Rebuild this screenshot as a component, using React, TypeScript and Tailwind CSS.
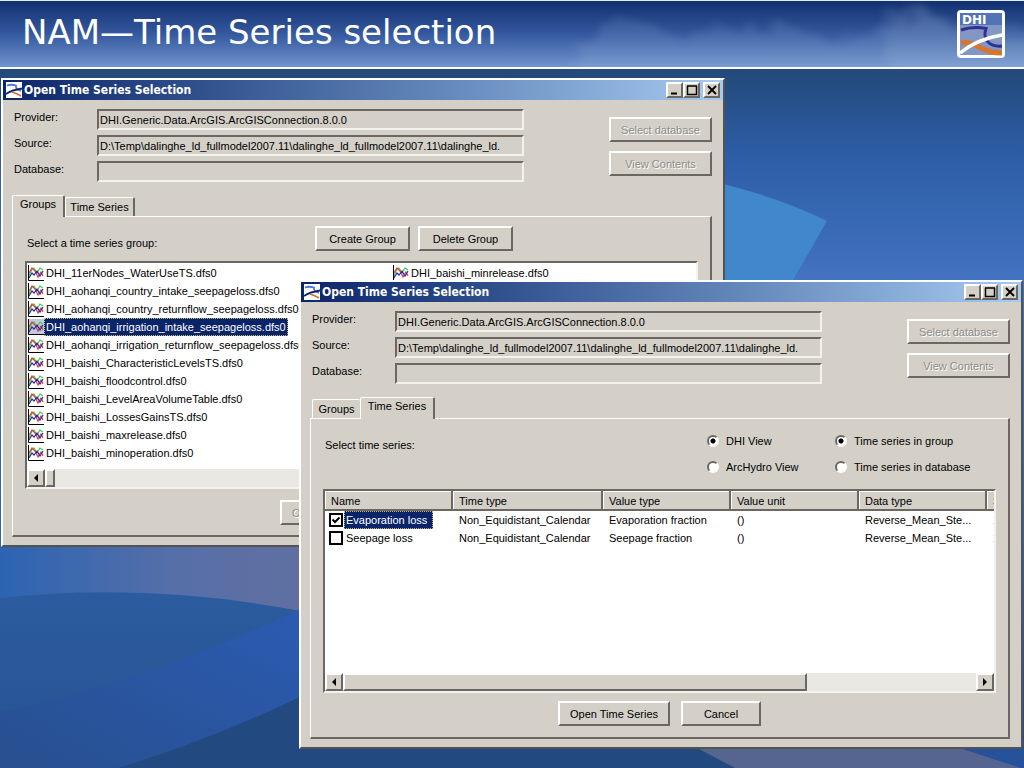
import type { ReactNode } from "react";
import clsx from "clsx";

const raised =
  "border-2 border-t-white border-l-white border-r-[#6b6863] border-b-[#6b6863] bg-[#d4d0c8]";
const sunken =
  "border-2 border-t-[#6b6863] border-l-[#6b6863] border-r-[#f4f2ee] border-b-[#f4f2ee]";

const source =
  "D:\\Temp\\dalinghe_ld_fullmodel2007.11\\dalinghe_ld_fullmodel2007.11\\dalinghe_ld.";

const groups = [
  "DHI_11erNodes_WaterUseTS.dfs0",
  "DHI_aohanqi_country_intake_seepageloss.dfs0",
  "DHI_aohanqi_country_returnflow_seepageloss.dfs0",
  "DHI_aohanqi_irrigation_intake_seepageloss.dfs0",
  "DHI_aohanqi_irrigation_returnflow_seepageloss.dfs0",
  "DHI_baishi_CharacteristicLevelsTS.dfs0",
  "DHI_baishi_floodcontrol.dfs0",
  "DHI_baishi_LevelAreaVolumeTable.dfs0",
  "DHI_baishi_LossesGainsTS.dfs0",
  "DHI_baishi_maxrelease.dfs0",
  "DHI_baishi_minoperation.dfs0",
  "DHI_baishi_minrelease.dfs0",
];

const series = [
  { name: "Evaporation loss", value: "Evaporation fraction", checked: true },
  { name: "Seepage loss", value: "Seepage fraction", checked: false },
];

function Backdrop() {
  return (
    <svg
      className="absolute inset-0 h-full w-full"
      viewBox="0 0 1024 768"
      preserveAspectRatio="none"
      aria-hidden="true"
    >
      <defs>
        <linearGradient id="sky" x1="0" y1="0" x2="0" y2="1">
          <stop offset="0.09" stopColor="#24497a" />
          <stop offset="0.2" stopColor="#2c5da5" />
          <stop offset="0.36" stopColor="#4272c0" />
          <stop offset="0.7" stopColor="#2d62b0" />
          <stop offset="1" stopColor="#234a80" />
        </linearGradient>
        <linearGradient id="mauve" x1="0" y1="0" x2="1" y2="0">
          <stop offset="0" stopColor="#2c64b2" />
          <stop offset="0.55" stopColor="#566fa8" />
          <stop offset="1" stopColor="#626f9f" />
        </linearGradient>
        <linearGradient id="hill" x1="0" y1="0" x2="0" y2="1">
          <stop offset="0" stopColor="#2b5c9f" />
          <stop offset="1" stopColor="#285290" />
        </linearGradient>
        <linearGradient id="band" x1="0" y1="1" x2="1" y2="0">
          <stop offset="0" stopColor="#28508f" />
          <stop offset="1" stopColor="#2b5bb2" />
        </linearGradient>
      </defs>
      <rect width="1024" height="768" fill="url(#sky)" />
      <path d="M700 179 Q770 193 827 221 L770 320 L700 320Z" fill="#4187cc" />
      <rect y="540" width="320" height="100" fill="url(#mauve)" />
      <path d="M0 598 Q150 582 300 611 L320 768 H0Z" fill="url(#hill)" />
      <path d="M0 712 Q160 678 300 609 V768 H0Z" fill="url(#band)" />
      <path d="M118 768 Q210 740 300 697 V740 H1024 V768Z" fill="#234a80" />
      <path d="M682 740 L735 768 H1024 L935 740Z" fill="#56658f" />
      <path d="M935 740 L1024 769 V740Z" fill="#25529a" />
    </svg>
  );
}

function HeaderClouds() {
  return (
    <svg
      className="absolute inset-0 h-full w-full"
      viewBox="0 0 1024 67"
      preserveAspectRatio="none"
      aria-hidden="true"
    >
      <defs>
        <filter id="soft" x="-20%" y="-20%" width="140%" height="140%">
          <feTurbulence type="fractalNoise" baseFrequency="0.07" numOctaves="4" seed="4" />
          <feDisplacementMap in="SourceGraphic" scale="26" />
          <feGaussianBlur stdDeviation="4" />
        </filter>
      </defs>
      <g filter="url(#soft)" fill="#b4c3e0" fillOpacity="0.14">
        <path d="M560 90 L590 34 L630 18 L655 24 L680 40 L720 26 L745 34 L775 24 L800 28 L830 44 L880 36 L885 10 L920 4 L950 20 L1040 30 V90Z" />
        <path d="M880 90 L890 26 L930 14 L960 34 L1040 38 V90Z" />
      </g>
    </svg>
  );
}

function DhiLogo() {
  return (
    <svg className="size-12" viewBox="0 0 48 48" role="img" aria-label="DHI">
      <rect x="1.5" y="1.5" width="45" height="45" rx="2.5" fill="#8397c4" stroke="#fff" strokeWidth="3" />
      <rect x="3" y="3" width="42" height="12" fill="#5273b5" />
      <path d="M4 20 Q16 16 29 18.5 Q26 27 31 32 Q36 37 45 36" fill="none" stroke="#30308f" strokeWidth="3" />
      <path d="M4 33 Q12 31 22 37 Q32 43 45 43" fill="none" stroke="#d5752f" strokeWidth="5" />
      <path d="M3 43 Q20 29 45 25" fill="none" stroke="#fff" strokeWidth="3.5" />
      <text x="5" y="13.5" fill="#fff" fontFamily="DejaVu Sans, sans-serif" fontWeight="700" fontSize="12">
        DHI
      </text>
    </svg>
  );
}

function WindowIcon() {
  return (
    <svg className="size-4" viewBox="0 0 16 16" aria-hidden="true">
      <rect width="16" height="16" fill="#fff" />
      <path d="M1 3.5 Q5 2 10 3.5 Q9 7 15 9" fill="none" stroke="#4a78dc" strokeWidth="1.8" />
      <path d="M0 12 Q6 8 16 6.5" fill="none" stroke="#10206a" strokeWidth="1.8" />
      <path d="M6 10 Q10 11 15 14" fill="none" stroke="#d56a3c" strokeWidth="1.6" />
    </svg>
  );
}

function ChartIcon({ selected = false }: { selected?: boolean }) {
  return (
    <svg className="size-4 shrink-0" viewBox="0 0 16 16" aria-hidden="true">
      <rect width="16" height="16" fill={selected ? "#c3cbe2" : "#fff"} />
      <path d="M1 11 L4 4 L6 3 L9 8 L12 3 L15 5" fill="none" stroke="#3ecf4a" strokeWidth="1.2" />
      <path d="M1 8 L4 3 L7 6 L10 12 L13 7 L15 11" fill="none" stroke="#e23a3a" strokeWidth="1.2" />
      <path d="M1 13 L4 8 L6 10 L9 6 L12 11 L15 6" fill="none" stroke="#2d2da8" strokeWidth="1.2" />
      <path d="M0.5 0 V15.5 H16" fill="none" stroke="#000" />
    </svg>
  );
}

function PushButton({
  children,
  className,
  disabled = false,
}: {
  children: ReactNode;
  className?: string;
  disabled?: boolean;
}) {
  return (
    <button
      type="button"
      disabled={disabled}
      className={clsx(
        "h-[25px] shrink-0 text-center leading-5 whitespace-nowrap",
        raised,
        disabled && "text-[#8e8b86] [text-shadow:1px_1px_0_#fff]",
        className,
      )}
    >
      {children}
    </button>
  );
}

function CaptionButton({ label, children }: { label: string; children: ReactNode }) {
  return (
    <button
      type="button"
      aria-label={label}
      className={clsx("flex h-4 w-[17px] items-center justify-center", raised)}
    >
      <svg className="h-3 w-3 shrink-0" viewBox="0 0 12 12" fill="none" stroke="#000" aria-hidden="true">
        {children}
      </svg>
    </button>
  );
}

function TitleBar() {
  return (
    <header className="flex h-5 items-center bg-linear-to-r from-[#0c2569] to-[#a6caf0] pr-[3px] pl-[3px]">
      <WindowIcon />
      <h2 className="ml-0.5 flex-1 font-['DejaVu_Sans_Condensed','DejaVu_Sans',sans-serif] text-[12px] leading-5 font-bold text-white">
        Open Time Series Selection
      </h2>
      <CaptionButton label="Minimize">
        <path d="M2 9.5h6" strokeWidth="2" />
      </CaptionButton>
      <CaptionButton label="Maximize">
        <path d="M1.5 2v8.5h9V2M1 2h10" strokeWidth="1.5" />
      </CaptionButton>
      <span className="w-[3px]" />
      <CaptionButton label="Close">
        <path d="M2 2l8 8M10 2l-8 8" strokeWidth="1.8" />
      </CaptionButton>
    </header>
  );
}

function ConnectionForm({ id }: { id: string }) {
  const fields = [
    { label: "Provider:", value: "DHI.Generic.Data.ArcGIS.ArcGISConnection.8.0.0" },
    { label: "Source:", value: source },
    { label: "Database:", value: "" },
  ];

  return (
    <div className="flex justify-between pt-[9px] pr-[11px] pl-[11px]">
      <div className="flex flex-col gap-[5px]">
        {fields.map((field) => (
          <div key={field.label} className="flex items-start">
            <label htmlFor={`${id}-${field.label}`} className="w-[83px] leading-4">
              {field.label}
            </label>
            <input
              id={`${id}-${field.label}`}
              readOnly
              value={field.value}
              className={clsx("h-[21px] w-[427px] bg-[#d4d0c8] px-px", sunken)}
            />
          </div>
        ))}
      </div>
      <div className="flex flex-col gap-[9px] pt-2">
        <PushButton disabled className="w-[103px]">
          Select database
        </PushButton>
        <PushButton disabled className="w-[103px]">
          View Contents
        </PushButton>
      </div>
    </div>
  );
}

function Tabs({ active }: { active: string }) {
  return (
    <div
      role="tablist"
      className={clsx("flex h-[22px] items-end", active === "Groups" ? "pl-[9px]" : "pl-[11px]")}
    >
      {["Groups", "Time Series"].map((tab) => (
        <button
          key={tab}
          type="button"
          role="tab"
          aria-selected={tab === active}
          className={clsx(
            "rounded-t-xs border-t border-l border-white bg-[#d4d0c8] whitespace-nowrap",
            tab === active
              ? "relative z-10 -mb-px h-[22px] border-r-2 border-r-[#6b6863] pb-1"
              : "h-[19px]",
            tab === "Time Series" && "border-r-2 border-r-[#6b6863]",
            tab === "Groups" && (tab === active ? "w-[53px]" : "w-12"),
            tab === "Time Series" && (tab === active ? "w-[75px]" : "w-[70px]"),
          )}
        >
          {tab}
        </button>
      ))}
    </div>
  );
}

function AppWindow({
  id,
  activeTab,
  className,
  children,
}: {
  id: string;
  activeTab: string;
  className: string;
  children: ReactNode;
}) {
  return (
    <section
      aria-label="Open Time Series Selection"
      className={clsx(
        "absolute w-[724px] border-2 border-t-white border-r-[#55534f] border-b-[#55534f] border-l-white bg-[#d4d0c8] pb-2",
        className,
      )}
    >
      <TitleBar />
      <ConnectionForm id={id} />
      <div className="pt-3">
        <Tabs active={activeTab} />
      </div>
      <div
        role="tabpanel"
        className="mr-[11px] ml-[9px] flex h-[321px] flex-col border-2 border-t border-l border-t-white border-r-[#6b6863] border-b-[#6b6863] border-l-white px-3"
      >
        {children}
      </div>
    </section>
  );
}

function ScrollBar({ children }: { children: ReactNode }) {
  return (
    <div className="flex h-[18px] bg-[#e9e8e3]">
      <ScrollButton label="Scroll left" path="M7 1 L3 5 L7 9Z" />
      {children}
      <span className="flex-1" />
      <ScrollButton label="Scroll right" path="M3 1 L7 5 L3 9Z" />
    </div>
  );
}

function ScrollButton({ label, path }: { label: string; path: string }) {
  return (
    <button
      type="button"
      aria-label={label}
      className={clsx("flex w-[18px] items-center justify-center", raised)}
    >
      <svg className="size-2.5 shrink-0" viewBox="0 0 10 10" aria-hidden="true">
        <path d={path} fill="#000" />
      </svg>
    </button>
  );
}

function GroupsPanel() {
  return (
    <>
      <div className="flex gap-2 pt-[9px]">
        <p className="w-[282px] pt-[9px] pl-0.5 leading-4">Select a time series group:</p>
        <PushButton className="w-[95px]">Create Group</PushButton>
        <PushButton className="w-[95px]">Delete Group</PushButton>
      </div>
      <div className={clsx("mt-2.5 flex h-[228px] flex-col bg-white", sunken)}>
        <ul className="grid flex-1 auto-cols-[365px] grid-flow-col grid-rows-[repeat(11,18px)] pt-px">
          {groups.map((name, i) => (
            <li key={name} className="flex items-center pl-px">
              <ChartIcon selected={i === 3} />
              <span
                className={clsx(
                  "h-[18px] px-0.5 leading-[18px] whitespace-nowrap",
                  i === 3 && "outline-1 -outline-offset-1 outline-dotted outline-[#c9b96a] bg-[#0a246a] text-white",
                )}
              >
                {name}
              </span>
            </li>
          ))}
        </ul>
        <ScrollBar>
          <span className={clsx("w-2.5", raised)} />
        </ScrollBar>
      </div>
      <div className="flex pt-[11px] pl-[255px]">
        <PushButton disabled className="w-28">
          Open Time Series
        </PushButton>
      </div>
    </>
  );
}

function RadioOption({
  name,
  label,
  checked = false,
}: {
  name: string;
  label: string;
  checked?: boolean;
}) {
  return (
    <label className="flex h-[26px] items-center gap-[7px] whitespace-nowrap">
      <input
        type="radio"
        name={name}
        defaultChecked={checked}
        className="size-3 appearance-none rounded-full border-2 border-t-[#6b6863] border-r-white border-b-white border-l-[#6b6863] bg-white checked:bg-[radial-gradient(circle,#000_2px,#fff_3px)]"
      />
      {label}
    </label>
  );
}

function TimeSeriesPanel() {
  return (
    <>
      <div className="flex pt-[9px]">
        <p className="flex-1 pt-[9px] pl-0.5 leading-4">Select time series:</p>
        <div className="w-32">
          <RadioOption name="view" label="DHI View" checked />
          <RadioOption name="view" label="ArcHydro View" />
        </div>
        <div className="w-[161px]">
          <RadioOption name="scope" label="Time series in group" checked />
          <RadioOption name="scope" label="Time series in database" />
        </div>
      </div>
      <div className={clsx("mt-[9px] flex h-[204px] flex-col overflow-hidden bg-white", sunken)}>
        <div className="flex-1 overflow-hidden">
          <table className="w-[790px] table-fixed border-collapse">
            <thead>
              <tr className="h-5">
                {["Name", "Time type", "Value type", "Value unit", "Data type", "Start time"].map(
                  (head) => (
                    <th
                      key={head}
                      className={clsx(
                        "bg-[#d4d0c8] p-0 pl-1.5 text-left leading-4 font-normal shadow-[inset_-2px_-2px_0_#6b6863,inset_1px_1px_0_#fff]",
                        head === "Time type" ? "w-[150px]" : "w-32",
                      )}
                    >
                      {head}
                    </th>
                  ),
                )}
              </tr>
            </thead>
            <tbody>
              {series.map((row) => (
                <tr key={row.name} className="h-[18px] leading-[18px] whitespace-nowrap">
                  <td className="p-0">
                    <label className="flex items-center pl-1">
                      <span className="relative mr-px size-3.5">
                        <input
                          type="checkbox"
                          defaultChecked={row.checked}
                          className="peer block size-3.5 appearance-none border-2 border-black bg-white"
                        />
                        <svg
                          className="pointer-events-none absolute inset-0 hidden size-3.5 peer-checked:block"
                          viewBox="0 0 14 14"
                          aria-hidden="true"
                        >
                          <path d="M3.5 6.5 L6 9 L10.5 4.5" fill="none" stroke="#000" strokeWidth="2" />
                        </svg>
                      </span>
                      <span
                        className={clsx(
                          "h-[18px] pr-1.5 pl-0.5",
                          row.checked && "bg-[#0a246a] text-white outline-1 -outline-offset-1 outline-dotted outline-[#c9b96a]",
                        )}
                      >
                        {row.name}
                      </span>
                    </label>
                  </td>
                  <td className="p-0 pl-1.5">Non_Equidistant_Calendar</td>
                  <td className="p-0 pl-1.5">{row.value}</td>
                  <td className="p-0 pl-1.5">()</td>
                  <td className="p-0 pl-1.5">Reverse_Mean_Ste...</td>
                  <td className="p-0 pl-1.5">1</td>
                </tr>
              ))}
            </tbody>
          </table>
        </div>
        <ScrollBar>
          <span className={clsx("w-[464px]", raised)} />
        </ScrollBar>
      </div>
      <div className="flex justify-center gap-[11px] pt-2">
        <PushButton className="w-28">Open Time Series</PushButton>
        <PushButton className="w-20">Cancel</PushButton>
      </div>
    </>
  );
}

export default function App() {
  return (
    <main className="relative min-h-screen overflow-hidden font-['Liberation_Sans',sans-serif] text-[11px] text-black">
      <Backdrop />
      <header className="relative flex h-[69px] items-center justify-between border-t border-b-2 border-t-[#dfeefa] border-b-white bg-linear-to-b from-[#12306f] via-[#35599f] to-[#7094cc] pr-[19px] pl-[22px]">
        <HeaderClouds />
        <h1 className="relative pb-1 font-['DejaVu_Sans',sans-serif] text-[34px] leading-10 text-white">
          NAM—Time Series selection
        </h1>
        <div className="relative">
          <DhiLogo />
        </div>
      </header>
      <AppWindow id="groups" activeTab="Groups" className="top-[78px] left-px">
        <GroupsPanel />
      </AppWindow>
      <AppWindow id="series" activeTab="Time Series" className="top-[280px] left-[299px]">
        <TimeSeriesPanel />
      </AppWindow>
    </main>
  );
}
